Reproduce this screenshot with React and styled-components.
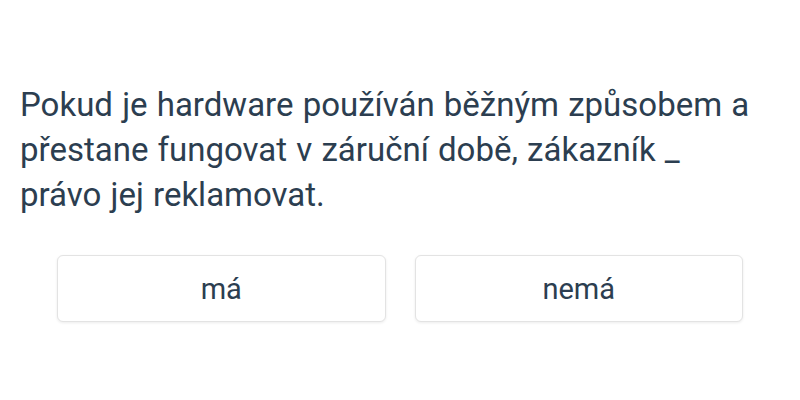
import React from 'react'
import styled, { createGlobalStyle } from 'styled-components'

const GlobalStyle = createGlobalStyle`
  html, body {
    margin: 0;
    padding: 0;
    background: #ffffff;
  }
  body {
    font-family: Roboto, "Noto Sans", sans-serif;
    color: #2c3e50;
  }
`

const Page = styled.div`
  min-height: 400px;
  box-sizing: border-box;
  padding: 82px 20px 0;
  display: flex;
  flex-direction: column;
`

const Question = styled.p`
  margin: 0;
  max-width: 735px;
  font-size: 33px;
  line-height: 45px;
  font-weight: 400;
  word-spacing: 1px;
  color: #2c3e50;
`

const Options = styled.div`
  width: 686px;
  margin: 38px auto 0;
  display: grid;
  grid-template-columns: 1fr 1fr;
  gap: 29px;
`

const Option = styled.button`
  height: 67px;
  background: #ffffff;
  border: 1px solid #e3e3e3;
  border-radius: 6px;
  box-shadow: 0 1px 3px rgba(0, 0, 0, 0.08);
  font-family: Roboto, "Noto Sans", sans-serif;
  font-size: 29px;
  color: #2c3e50;
  cursor: pointer;
  padding: 0;
`

const App = () => {
  return (
    <>
      <GlobalStyle />
      <Page>
        <Question>
          Pokud je hardware používán běžným způsobem a přestane fungovat v záruční době, zákazník _ právo jej reklamovat.
        </Question>
        <Options>
          <Option>má</Option>
          <Option>nemá</Option>
        </Options>
      </Page>
    </>
  )
}

export default App
